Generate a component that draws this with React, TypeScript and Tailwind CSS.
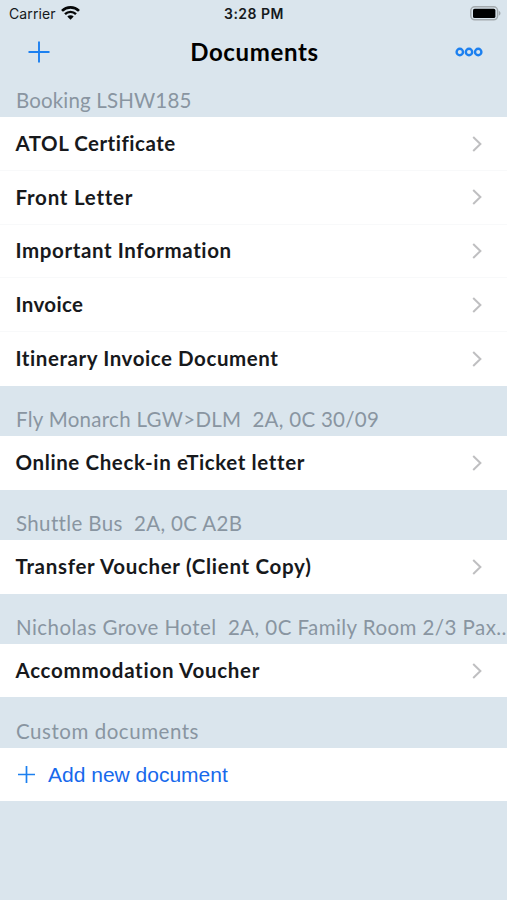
interface Section {
  title: string;
  titleClass: string;
  items: { name: string; className: string }[];
}

const sections: Section[] = [
  {
    title: "Booking LSHW185",
    titleClass: "tracking-[0.15px]",
    items: [
      { name: "ATOL Certificate", className: "tracking-[0.5px]" },
      { name: "Front Letter", className: "tracking-[0.75px]" },
      { name: "Important Information", className: "tracking-[0.6px]" },
      { name: "Invoice", className: "tracking-[0.35px]" },
      { name: "Itinerary Invoice Document", className: "tracking-[0.57px]" },
    ],
  },
  {
    title: "Fly Monarch LGW>DLM  2A, 0C 30/09",
    titleClass: "tracking-[0.28px]",
    items: [{ name: "Online Check-in eTicket letter", className: "tracking-[0.61px]" }],
  },
  {
    title: "Shuttle Bus  2A, 0C A2B",
    titleClass: "tracking-[0.36px]",
    items: [{ name: "Transfer Voucher (Client Copy)", className: "tracking-[0.69px]" }],
  },
  {
    title: "Nicholas Grove Hotel  2A, 0C Family Room 2/3 Pax…",
    titleClass: "tracking-[0.44px]",
    items: [{ name: "Accommodation Voucher", className: "tracking-[0.72px]" }],
  },
];

function StatusBar() {
  return (
    <div className="grid h-[27px] grid-cols-3 items-center pr-[6px] pl-[9px] font-['Inter','Liberation_Sans',sans-serif] text-[14px] text-[#15191c]">
      <div className="flex items-center gap-[5px]">
        <span className="tracking-[0.1px]">Carrier</span>
        <svg className="-mt-px" width="19" height="14" viewBox="0 0 19 14" fill="none" stroke="#050708">
          <path d="M1 4.9A12.2 12.2 0 0 1 18 4.9" strokeWidth="2.7" />
          <path d="M4 8.1A7.8 7.8 0 0 1 15 8.1" strokeWidth="2.4" />
          <path d="M9.5 13.7L6.3 10.5A4.5 4.5 0 0 1 12.7 10.5Z" fill="#050708" stroke="none" />
        </svg>
      </div>
      <span className="pr-[2px] text-center font-semibold tracking-[0.5px]">3:28 PM</span>
      <svg className="justify-self-end" width="31" height="15" viewBox="0 0 31 15">
        <rect x="0.8" y="0.8" width="26.8" height="13" rx="4" fill="none" stroke="#a3a9ad" strokeWidth="1.5" />
        <rect x="3" y="2.8" width="22.4" height="9.2" rx="1.6" fill="#000" />
        <path d="M28.9 5C31 5.7 31 8.9 28.9 9.6Z" fill="#a3a9ad" />
      </svg>
    </div>
  );
}

function NavBar() {
  return (
    <div className="grid h-[50px] grid-cols-[1fr_auto_1fr] items-center pr-[24px] pl-[28px]">
      <button aria-label="Add">
        <svg width="22" height="22" viewBox="0 0 22 22" stroke="#1c80f0" strokeWidth="1.9">
          <path d="M0.5 11H21.5M11 0.5V21.5" />
        </svg>
      </button>
      <h1 className="-mt-px -ml-[2px] text-[24px] leading-none font-bold tracking-[0.65px] text-black">Documents</h1>
      <button aria-label="More" className="justify-self-end">
        <svg width="28" height="10" viewBox="0 0 28 10" fill="none" stroke="#1c80f0" strokeWidth="2.4">
          <circle cx="4.8" cy="5" r="3.2" />
          <circle cx="14" cy="5" r="3.2" />
          <circle cx="23.2" cy="5" r="3.2" />
        </svg>
      </button>
    </div>
  );
}

function SectionTitle({ title, className }: { title: string; className: string }) {
  return (
    <h2 className="flex h-[50.2px] items-end overflow-hidden pb-[4px] pl-[16px] text-[20.5px] leading-[25px] whitespace-pre text-[#8995a1]">
      <span className={className}>{title}</span>
    </h2>
  );
}

function App() {
  return (
    <div className="h-[900px] w-full overflow-hidden bg-[#dae5ed] font-['Lato','Liberation_Sans',sans-serif]">
      <StatusBar />
      <NavBar />
      <div className="-mt-[9.8px]">
        {sections.map((section) => (
          <section key={section.title}>
            <SectionTitle title={section.title} className={section.titleClass} />
            <ul className="divide-y divide-[#f8f9fa] bg-white">
              {section.items.map((item) => (
                <li key={item.name} className="flex h-[53.7px] items-center justify-between pr-[25px] pl-[15.5px]">
                  <span className={`pb-[0.8px] text-[20.5px] leading-none font-bold whitespace-pre text-[#17191c] ${item.className}`}>
                    {item.name}
                  </span>
                  <svg width="10" height="16" viewBox="0 0 10 16" fill="none" stroke="#bfbfc1" strokeWidth="2">
                    <path d="M1.2 1L8.4 8L1.2 15" />
                  </svg>
                </li>
              ))}
            </ul>
          </section>
        ))}
        <SectionTitle title="Custom documents" className="tracking-[0.54px]" />
        <button className="flex h-[53.7px] w-full items-center bg-white pl-[18px] text-[#1769ec]">
          <svg width="17" height="17" viewBox="0 0 17 17" stroke="#1c80f0" strokeWidth="1.7">
            <path d="M0 8.5H17M8.5 0V17" />
          </svg>
          <span className="ml-[13px] font-['Liberation_Sans',sans-serif] text-[21px] leading-none">
            Add new document
          </span>
        </button>
      </div>
    </div>
  );
}

export default App;
